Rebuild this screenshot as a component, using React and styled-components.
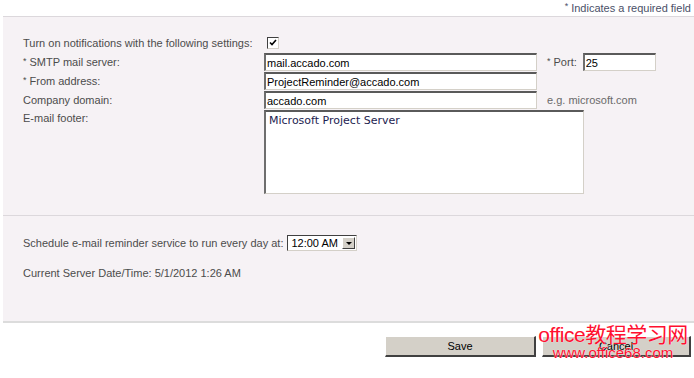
import React from 'react';
import styled, { createGlobalStyle } from 'styled-components';

const GlobalStyle = createGlobalStyle`
    html, body {
        margin: 0;
        padding: 0;
        background: #fff;
    }
    body {
        font-family: "Liberation Sans", Arial, sans-serif;
        font-size: 11px;
        color: #4c4c4c;
    }
`;

const Page = styled.div`
    width: 694px;
    height: 378px;
    position: relative;
    overflow: hidden;
`;

const TopBar = styled.div`
    height: 16px;
    display: flex;
    justify-content: flex-end;
    align-items: center;
    padding-right: 3px;
    color: #4a5068;
`;

const Star = styled.span`
    font-size: 9px;
    position: relative;
    top: -2px;
    margin-right: 3px;
`;

const Panel = styled.div`
    margin-left: 3px;
    background: #f6f2f5;
    border-top: 1px solid #dcd8dc;
    border-bottom: 2px solid #dcdcdc;
`;

const Section = styled.div`
    padding: ${p => p.$padding};
    height: ${p => p.$height}px;
    box-sizing: border-box;
    border-bottom: ${p => (p.$divider ? '1px solid #dcd8dc' : 'none')};
`;

const Row = styled.div`
    display: flex;
    align-items: center;
    height: ${p => p.$height || 18}px;
    margin-bottom: ${p => (p.$gap ?? 1)}px;
`;

const TopRow = styled(Row)`
    align-items: flex-start;
`;

const Label = styled.div`
    width: 241px;
    flex-shrink: 0;
    color: #4c4c4c;
    padding-top: ${p => p.$top || 0}px;
`;

const Input = styled.input`
    box-sizing: border-box;
    width: ${p => p.$width}px;
    height: 18px;
    margin: 0;
    padding: 0 1px;
    border-width: 2px 1px 1px 2px;
    border-style: solid;
    border-color: #5a5a5a #d4d0c8 #d4d0c8 #6e6e6e;
    background: #fff;
    font-family: "Liberation Sans", Arial, sans-serif;
    font-size: 11px;
    color: #000;
    outline: none;
`;

const TextArea = styled.textarea`
    box-sizing: border-box;
    width: 320px;
    height: 84px;
    margin: 0;
    padding: 2px 3px;
    border-width: 2px 1px 1px 2px;
    border-style: solid;
    border-color: #5a5a5a #d4d0c8 #d4d0c8 #6e6e6e;
    background: #fff;
    font-family: "DejaVu Sans", Verdana, sans-serif;
    font-size: 11px;
    color: #1c1c50;
    resize: none;
    outline: none;
`;

const Side = styled.div`
    margin-left: 10px;
    display: flex;
    align-items: center;
    color: #4c4c4c;
`;

const Hint = styled(Side)`
    color: #6a6a6a;
`;

const SideLabel = styled.span`
    margin-right: 6px;
`;

const CheckBox = styled.span`
    box-sizing: border-box;
    width: 12px;
    height: 12px;
    margin-left: 3px;
    border-width: 1px;
    border-style: solid;
    border-color: #404040 #d4d0c8 #d4d0c8 #404040;
    background: #fff;
    display: flex;
    align-items: center;
    justify-content: center;
`;

const Line = styled.div`
    display: flex;
    align-items: center;
    height: ${p => p.$height || 16}px;
    margin-bottom: ${p => p.$gap || 0}px;
`;

const Select = styled.div`
    box-sizing: border-box;
    width: 70px;
    height: 16px;
    margin-left: 4px;
    border-width: 1px;
    border-style: solid;
    border-color: #404040 #d4d0c8 #d4d0c8 #404040;
    background: #fff;
    display: flex;
    align-items: stretch;
    color: #000;
`;

const SelectText = styled.span`
    flex: 1;
    padding-left: 3px;
    display: flex;
    align-items: center;
    font-size: 11px;
`;

const SelectArrow = styled.span`
    width: 13px;
    margin: 1px;
    background: #d4d0c8;
    border-width: 1px;
    border-style: solid;
    border-color: #fff #404040 #404040 #fff;
    box-sizing: border-box;
    display: flex;
    align-items: center;
    justify-content: center;
    &::after {
        content: '';
        border-left: 3px solid transparent;
        border-right: 3px solid transparent;
        border-top: 3px solid #000;
    }
`;

const Footer = styled.div`
    display: flex;
    justify-content: flex-end;
    gap: 6px;
    padding: 13px 3px 0 0;
`;

const Button = styled.button`
    box-sizing: border-box;
    width: ${p => p.$width}px;
    height: 21px;
    margin: 0;
    padding: 0;
    background: #d4d0c8;
    border-width: 1px 2px 2px 1px;
    border-style: solid;
    border-color: #fff #404040 #404040 #fff;
    font-family: "Liberation Sans", Arial, sans-serif;
    font-size: 11px;
    color: #000;
`;

const Watermark = styled.div`
    position: absolute;
    left: 537px;
    top: 324px;
    width: 152px;
    display: flex;
    flex-direction: column;
    align-items: center;
    color: #ff1030;
    font-family: "Liberation Sans", "Noto Sans CJK SC", sans-serif;
    line-height: 1;
    pointer-events: none;
    text-shadow: 0 0 1px #fff;
`;

const MarkTitle = styled.span`
    font-size: 21px;
    letter-spacing: -0.5px;
`;

const MarkUrl = styled.span`
    font-size: 15px;
    margin-top: 0;
`;

const CheckIcon = () => (
    <svg width="8" height="8" viewBox="0 0 8 8">
        <path d="M1 3.5 L3 5.5 L7 1" fill="none" stroke="#000" strokeWidth="1.6" />
    </svg>
);

export default function App() {
    return (
        <Page>
            <GlobalStyle />
            <TopBar>
                <Star>*</Star>Indicates a required field
            </TopBar>
            <Panel>
                <Section $padding="17px 0 0 20px" $height={199} $divider>
                    <Row $height={17} $gap={2}>
                        <Label>Turn on notifications with the following settings:</Label>
                        <CheckBox><CheckIcon /></CheckBox>
                    </Row>
                    <Row>
                        <Label><Star>*</Star>SMTP mail server:</Label>
                        <Input $width={273} defaultValue="mail.accado.com" />
                        <Side>
                            <SideLabel><Star>*</Star>Port:</SideLabel>
                            <Input $width={73} defaultValue="25" />
                        </Side>
                    </Row>
                    <Row>
                        <Label><Star>*</Star>From address:</Label>
                        <Input $width={273} defaultValue="ProjectReminder@accado.com" />
                    </Row>
                    <Row>
                        <Label>Company domain:</Label>
                        <Input $width={273} defaultValue="accado.com" />
                        <Hint>e.g. microsoft.com</Hint>
                    </Row>
                    <TopRow $height={84}>
                        <Label $top={2}>E-mail footer:</Label>
                        <TextArea defaultValue="Microsoft Project Server" />
                    </TopRow>
                </Section>
                <Section $padding="19px 0 0 20px" $height={105}>
                    <Line $gap={15}>
                        Schedule e-mail reminder service to run every day at:
                        <Select>
                            <SelectText>12:00 AM</SelectText>
                            <SelectArrow />
                        </Select>
                    </Line>
                    <Line $height={13}>Current Server Date/Time: 5/1/2012 1:26 AM</Line>
                </Section>
            </Panel>
            <Footer>
                <Button $width={151}>Save</Button>
                <Button $width={149}>Cancel</Button>
            </Footer>
            <Watermark>
                <MarkTitle>office教程学习网</MarkTitle>
                <MarkUrl>www.office68.com</MarkUrl>
            </Watermark>
        </Page>
    );
}
